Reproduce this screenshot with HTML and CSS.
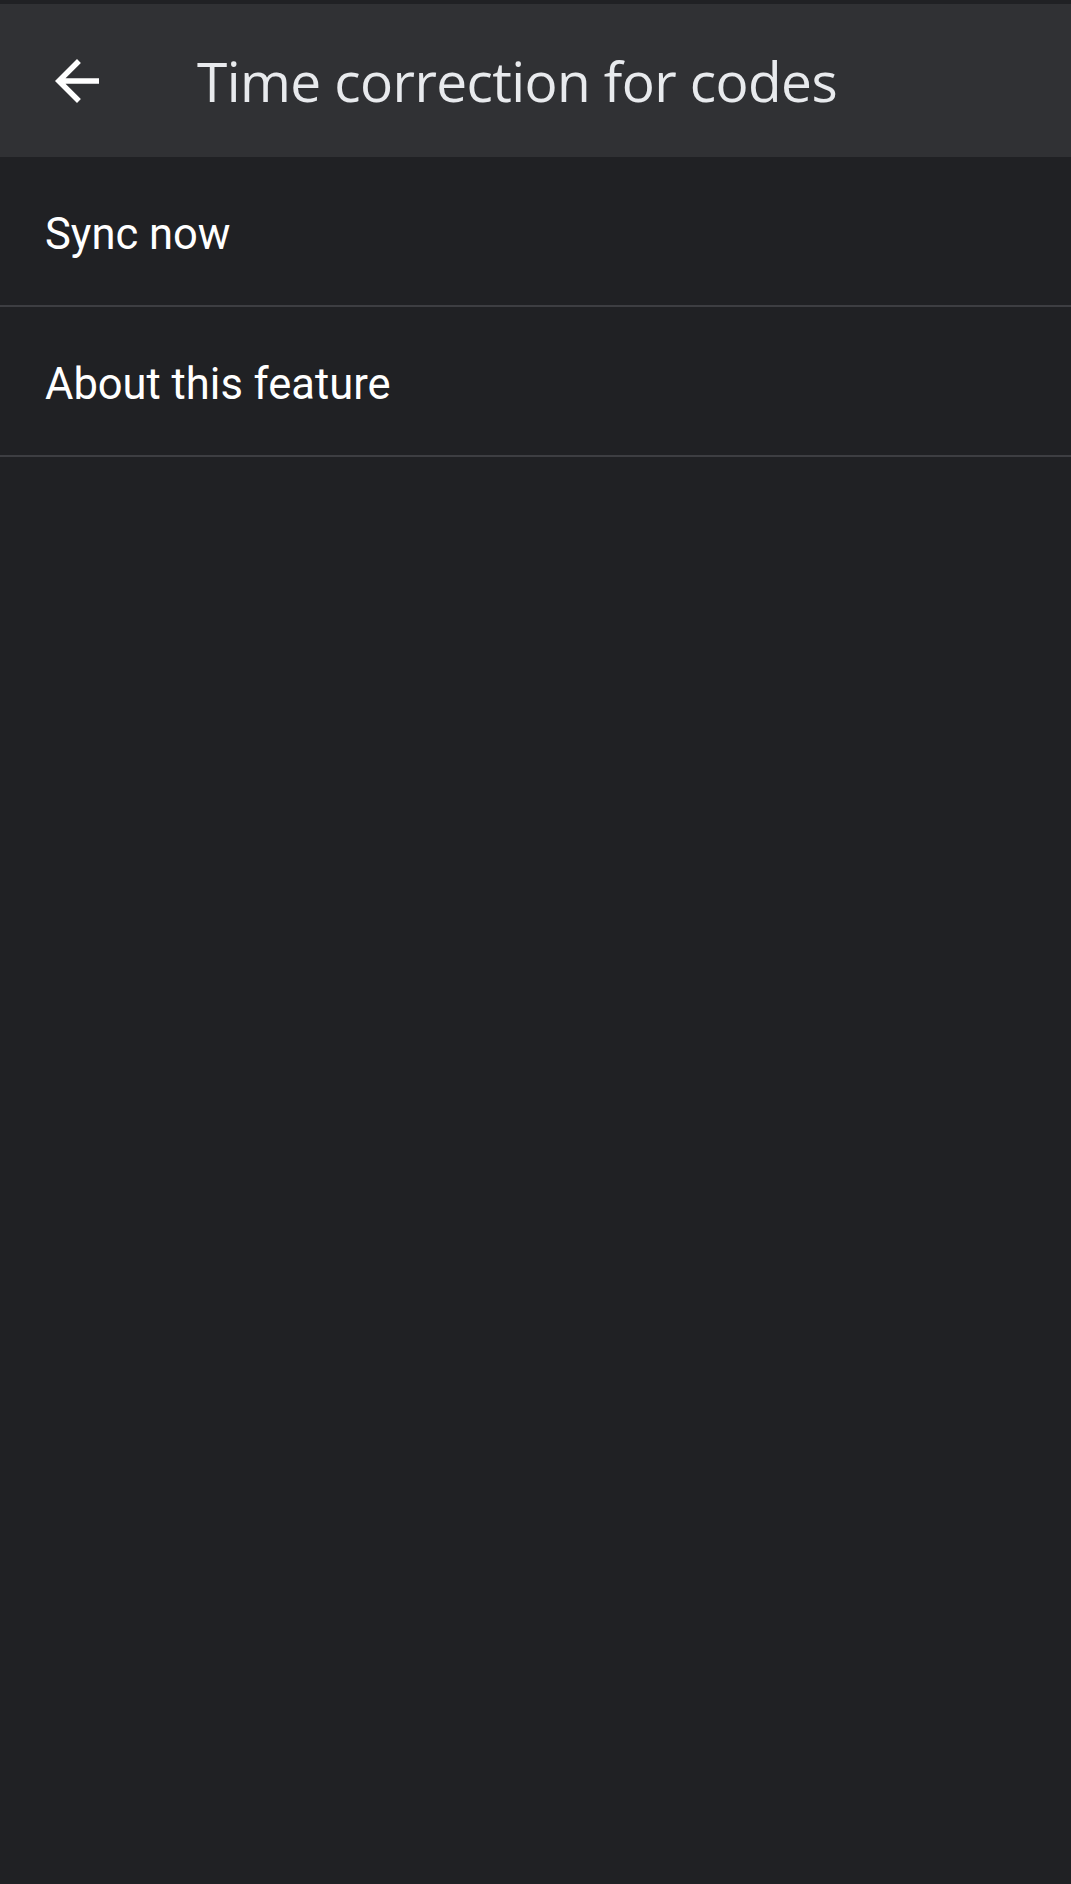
FILE: index.html
```html
<!DOCTYPE html>
<html lang="en">
<head>
    <meta charset="UTF-8">
    <meta name="viewport" content="width=device-width, initial-scale=1.0">
    <title>Time correction for codes</title>
    <link rel="stylesheet" href="styles.css">
</head>
<body>
    <div class="screen">
        <header class="toolbar">
            <button class="back-btn" aria-label="Back">
                <svg viewBox="0 0 24 24" width="66" height="66">
                    <path d="M20 11H7.83l5.59-5.59L12 4l-8 8 8 8 1.41-1.41L7.83 13H20v-2z" fill="#ffffff"/>
                </svg>
            </button>
            <h1 class="title">Time correction for codes</h1>
        </header>

        <ul class="pref-list">
            <li class="pref-item">Sync now</li>
            <li class="pref-item">About this feature</li>
        </ul>
    </div>
</body>
</html>
```

FILE: styles.css
```css
body {
    margin: 0;
    background-color: #202124;
    font-family: Roboto, "Liberation Sans", sans-serif;
    color: #ffffff;
}
.screen {
    min-height: 1884px;
    padding-top: 4px;
}
.toolbar {
    height: 153px;
    background: #303134;
    display: flex;
    align-items: center;
}
.back-btn {
    background: none;
    border: none;
    padding: 0;
    margin-left: 44px;
    width: 66px;
    height: 66px;
    display: flex;
    align-items: center;
    justify-content: center;
    cursor: pointer;
}
.title {
    margin: 0 0 0 87px;
    font-family: "Open Sans", Roboto, sans-serif;
    font-weight: 400;
    font-size: 55px;
    color: #e8eaed;
    letter-spacing: -0.6px;
}
.pref-list {
    list-style: none;
    margin: 0;
    padding: 0;
}
.pref-item {
    height: 150px;
    box-sizing: border-box;
    padding: 6px 0 0 45px;
    display: flex;
    align-items: center;
    font-size: 43.5px;
    border-bottom: 2px solid #3d3e42;
}
```
